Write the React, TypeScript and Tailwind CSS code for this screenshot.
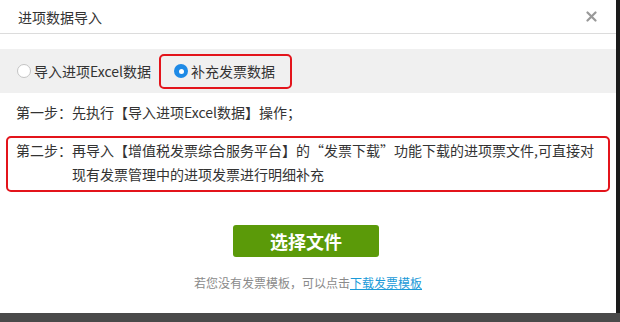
export default function App() {
  return (
    <div className="flex h-[322px] w-[620px] flex-col overflow-hidden bg-[#4a4a4a] font-['Noto_Sans_CJK_SC',sans-serif] text-[14px] text-[#333]">
      <div className="flex flex-1">
        <div className="flex w-[616px] flex-col bg-white">
          {/* header */}
          <div className="flex h-[34px] items-center justify-between border-b border-[#dcdcdc] pl-[18px] pr-[19px]">
            <span className="leading-none">进项数据导入</span>
            <svg width="11" height="11" viewBox="0 0 11 11" className="text-[#999]">
              <path d="M1.5 1.5 L9.5 9.5 M9.5 1.5 L1.5 9.5" stroke="currentColor" strokeWidth="2.2" strokeLinecap="round" />
            </svg>
          </div>

          {/* import mode */}
          <div className="mt-[15px] flex h-[44px] items-center bg-[#f0f0f0] pl-[17px]">
            <label className="flex items-center gap-[3px]">
              <span className="h-[14px] w-[14px] rounded-full border border-[#c4c4c4] bg-white" />
              <span>导入进项Excel数据</span>
            </label>
            <div className="ml-[8px] flex h-[35px] w-[133px] items-center gap-[3px] rounded-[5px] border-2 border-[#e3141b] pl-[13px]">
              <span className="flex h-[14px] w-[14px] items-center justify-center rounded-full bg-[#1e8ae6]">
                <span className="h-[5px] w-[5px] rounded-full bg-white" />
              </span>
              <span>补充发票数据</span>
            </div>
          </div>

          {/* steps */}
          <p className="mt-[7px] pl-[16px] leading-[24px]">第一步：先执行【导入进项Excel数据】操作；</p>
          <div className="mx-[6px] mt-[12px] flex rounded-[5px] border-2 border-[#e3141b] pb-[4px] pl-[8px] leading-[24px]">
            <span className="shrink-0">第二步：</span>
            <div className="whitespace-nowrap">
              <div>再导入【增值税发票综合服务平台】的“发票下载”功能下载的进项票文件,可直接对</div>
              <div>现有发票管理中的进项发票进行明细补充</div>
            </div>
          </div>

          <button className="ml-[233px] mt-[33px] h-[32px] w-[146px] rounded-[3px] bg-[#5b9a09] text-[18px] font-bold text-white">
            选择文件
          </button>

          <p className="mt-[16px] text-center text-[12px] leading-[20px] text-[#8a8a8a]">
            若您没有发票模板，可以点击
            <a className="text-[#1a9ad8] underline">下载发票模板</a>
          </p>
        </div>
        <div className="flex-1 bg-[#1b1b1b]" />
      </div>
      <div className="h-[9px] bg-[#4a4a4a]" />
    </div>
  );
}
